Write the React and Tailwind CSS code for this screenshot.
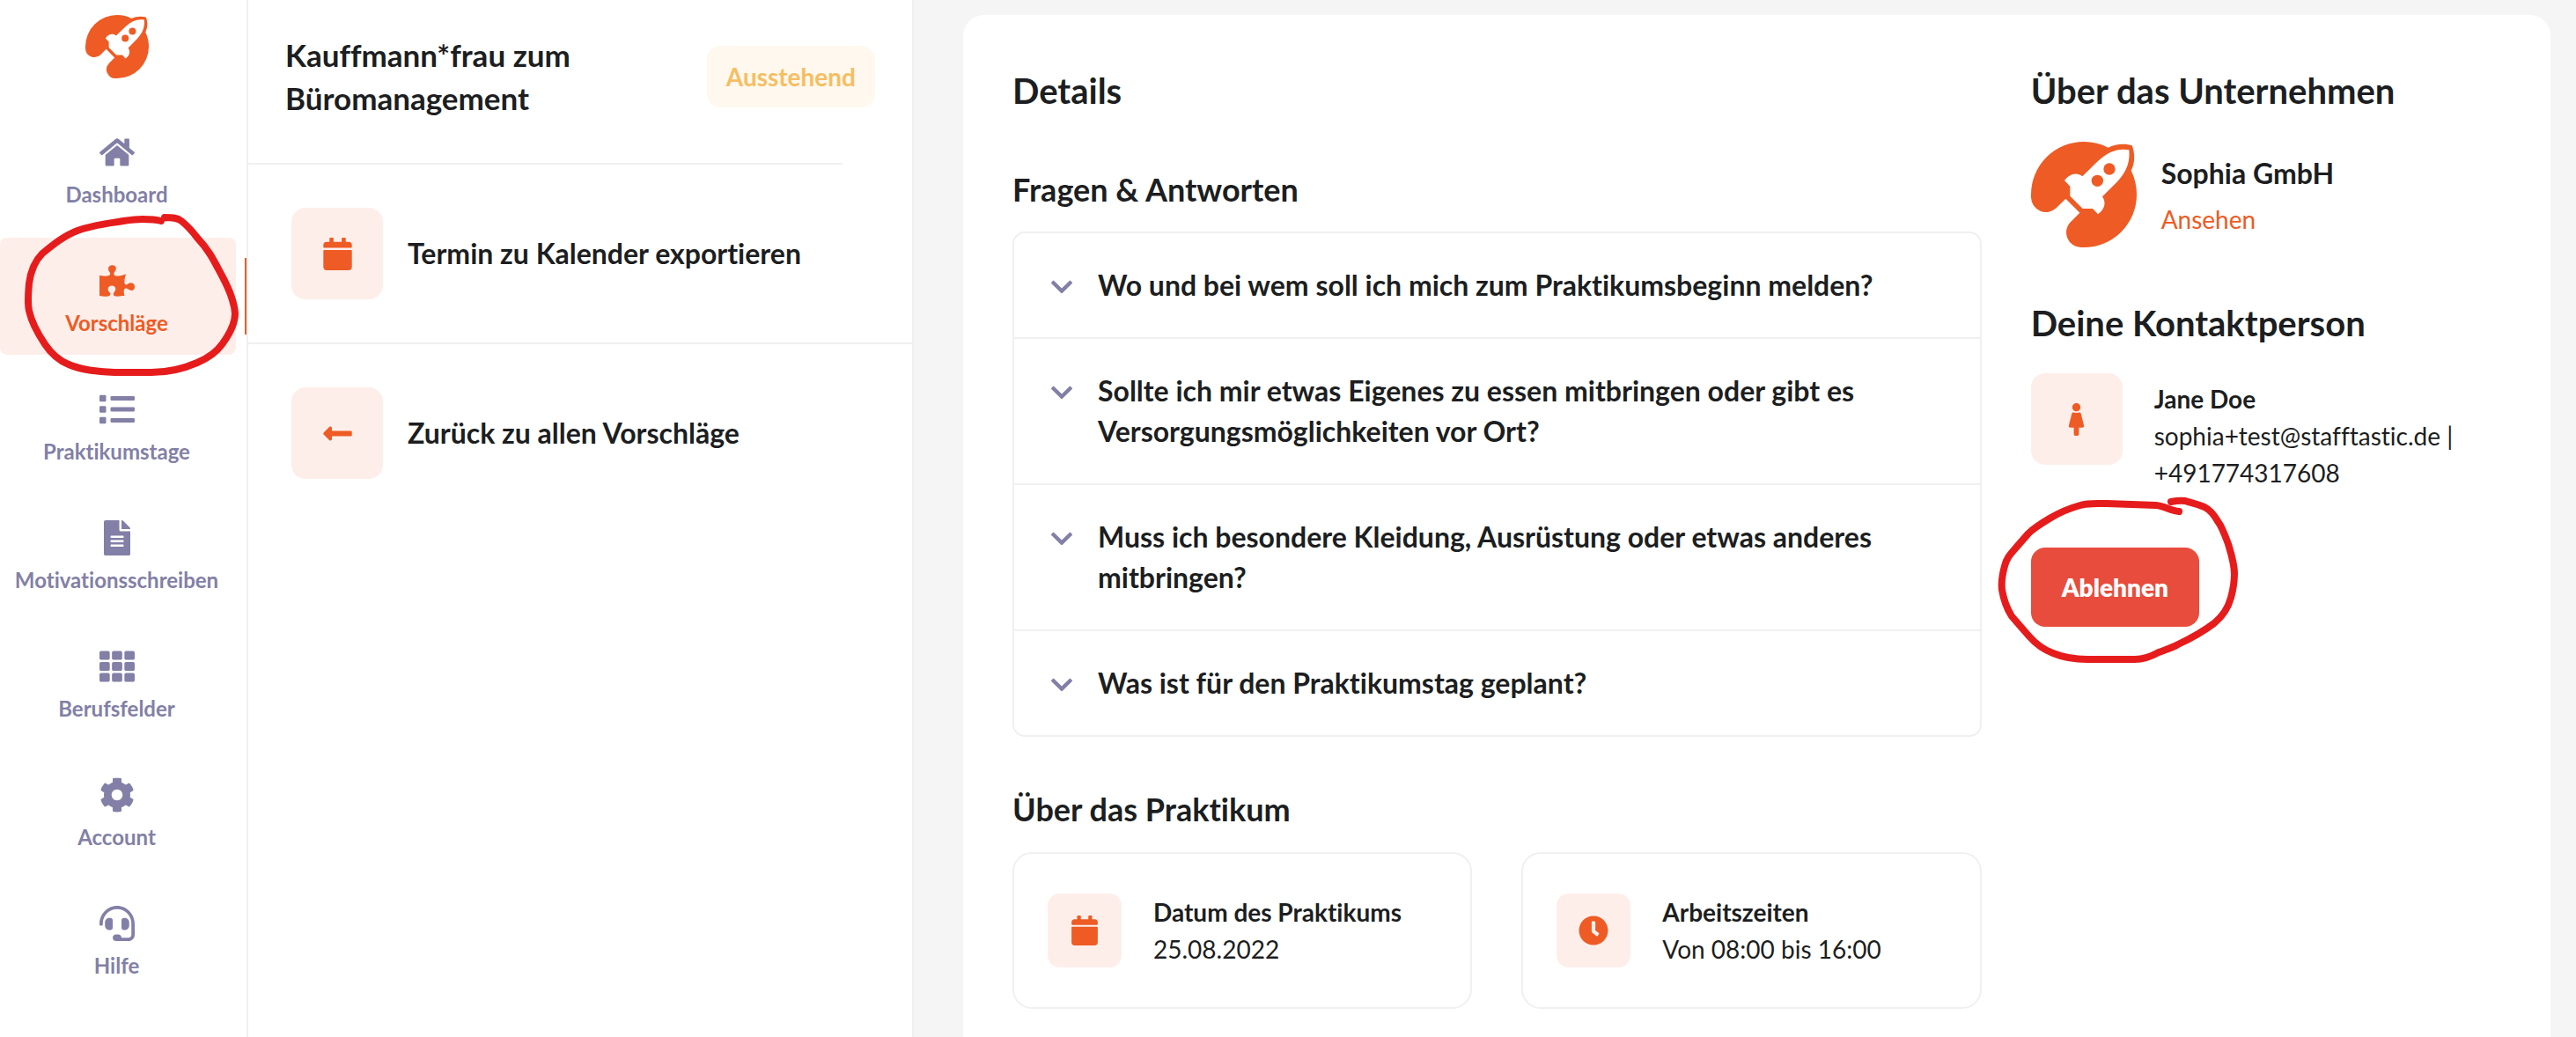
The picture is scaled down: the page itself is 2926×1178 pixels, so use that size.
import React, { useState } from 'react';
import {
  FaHome,
  FaPuzzlePiece,
  FaList,
  FaFileAlt,
  FaTh,
  FaCog,
  FaHeadset,
  FaCalendar,
  FaLongArrowAltLeft,
  FaClock,
  FaFemale,
  FaChevronDown,
} from 'react-icons/fa';

const navItems = [
  { label: 'Dashboard', icon: FaHome },
  { label: 'Vorschläge', icon: FaPuzzlePiece, active: true },
  { label: 'Praktikumstage', icon: FaList },
  { label: 'Motivationsschreiben', icon: FaFileAlt },
  { label: 'Berufsfelder', icon: FaTh },
  { label: 'Account', icon: FaCog },
  { label: 'Hilfe', icon: FaHeadset },
];

const questions = [
  'Wo und bei wem soll ich mich zum Praktikumsbeginn melden?',
  'Sollte ich mir etwas Eigenes zu essen mitbringen oder gibt es Versorgungsmöglichkeiten vor Ort?',
  'Muss ich besondere Kleidung, Ausrüstung oder etwas anderes mitbringen?',
  'Was ist für den Praktikumstag geplant?',
];

const facts = [
  { title: 'Datum des Praktikums', value: '25.08.2022', icon: FaCalendar },
  { title: 'Arbeitszeiten', value: 'Von 08:00 bis 16:00', icon: FaClock },
];

const Logo = ({ className }) => (
  <svg viewBox="18 18 360 360" className={className} aria-hidden="true">
    <path
      fill="#ee5b24"
      d="M18 198A180 180 0 0 1 198 18C228 18 256 25 281 38C305 25 340 23 362 31C373 58 372 92 359 116C372 142 378 170 378 198A180 180 0 0 1 198 378H190A51 51 0 0 1 154 290L184 260L136 212L104 244A51 51 0 0 1 18 208Z"
    />
    <path
      fill="#fff"
      d="M132 150C146 130 172 118 193 136L246 84C280 52 315 39 352 46C356 85 345 120 310 156L261 205C274 225 271 247 246 265L228 246H194L151 203V170Z"
    />
    <circle cx="285" cy="111" r="20" fill="#ee5b24" />
    <circle cx="244" cy="151" r="20" fill="#ee5b24" />
  </svg>
);

const NavCircle = () => (
  <svg
    viewBox="24 240 252 192"
    className="pointer-events-none absolute -top-[30px] left-6 z-10 h-[192px] w-[252px]"
    fill="none"
    stroke="#e61c1c"
    strokeWidth="8"
    strokeLinecap="round"
    strokeLinejoin="round"
    aria-hidden="true"
  >
    <path d="M183 251C176 249 170 249 162 249C154 249 147 250 140 251C122 254 104 256 88 262C72 268 59 279 48 288C40 296 35 307 33 322C32 333 31 344 33 353C36 367 43 379 51 391C59 403 68 410 78 414C94 421 112 422 130 423H172C190 423 208 419 224 412C238 406 246 400 253 390C261 379 267 368 267 356C266 341 259 326 252 313C242 294 237 284 224 270C217 261 211 255 206 251C201 247 194 247 187 247" />
  </svg>
);

const ButtonCircle = () => (
  <svg
    viewBox="2266 562 278 194"
    className="pointer-events-none absolute -top-[60px] -left-10 z-10 h-[194px] w-[278px]"
    fill="none"
    stroke="#e61c1c"
    strokeWidth="8"
    strokeLinecap="round"
    strokeLinejoin="round"
    aria-hidden="true"
  >
    <path d="M2474 581C2464 580 2458 575 2448 574L2392 572C2381 572 2371 571 2362 574C2347 578 2337 583 2327 589C2317 595 2309 600 2303 606L2289 622C2283 629 2278 634 2276 643C2273 654 2272 662 2273 670C2275 682 2279 692 2284 700L2304 723C2311 731 2320 738 2331 742C2343 747 2354 749 2370 749H2424C2434 749 2442 746 2451 741C2459 738 2466 736 2473 732C2488 725 2502 717 2514 708C2525 699 2530 690 2533 679C2536 668 2537 660 2537 652C2537 640 2533 628 2530 618C2526 607 2522 597 2518 592C2514 585 2509 579 2503 576C2496 573 2487 571 2481 569C2475 568 2470 569 2465 570" />
  </svg>
);

const IconBox = ({ icon: Icon, small }) => (
  <span
    className={`flex shrink-0 items-center justify-center bg-[#feeeea] text-[#ee5b24] ${
      small ? 'size-[84px] rounded-[14px] text-[34px]' : 'size-[104px] rounded-[16px] text-[37px]'
    }`}
  >
    <Icon />
  </span>
);

const Sidebar = () => (
  <aside className="flex w-[282px] shrink-0 flex-col border-r-2 border-[#f0f0f1]">
    <a href="#start" aria-label="Startseite" className="mt-[17px] ml-[97px] w-[72px]">
      <Logo className="size-[72px]" />
    </a>
    <nav className="mt-[35px] flex flex-col gap-[13px]">
      {navItems.map(({ label, icon: Icon, active }) => (
        <div key={label} className="relative pr-3">
          <a
            href={`#${label}`}
            className={`flex flex-col items-center rounded-lg pt-[29px] pr-[3px] pb-[18px] text-[24px] leading-[36px] font-bold ${
              active ? 'bg-[#feeeea] text-[#ee5b24]' : 'text-[#8280a6]'
            }`}
          >
            <Icon className="mb-[10px] text-[40px]" />
            {label}
          </a>
          {active && (
            <>
              <span className="absolute top-[23px] right-0 h-[87px] w-[2px] bg-[#ee5b24]" />
              <NavCircle />
            </>
          )}
        </div>
      ))}
    </nav>
  </aside>
);

const ActionPanel = () => (
  <section className="w-[756px] shrink-0 border-r-2 border-[#f0f0f1]">
    <div className="flex items-center justify-between gap-8 pt-[38px] pr-[42px] pb-[49px] pl-[42px]">
      <h1 className="text-[35px] leading-[49px] font-bold">
        Kauffmann*frau zum Büromanagement
      </h1>
      <span className="rounded-[16px] bg-[#fff8ee] px-[22px] py-[14px] text-[28px] leading-[42px] font-bold text-[#f6be63]">
        Ausstehend
      </span>
    </div>
    <hr className="mr-[79px] border-t-2 border-[#f0f0f1]" />
    <button
      type="button"
      className="flex w-full items-center gap-7 border-b-2 border-[#f0f0f1] py-[49px] pl-[49px] text-left text-[32px] leading-[46px] font-bold"
    >
      <IconBox icon={FaCalendar} />
      Termin zu Kalender exportieren
    </button>
    <a
      href="#vorschlaege"
      className="flex items-center gap-7 py-[49px] pl-[49px] text-[32px] leading-[46px] font-bold"
    >
      <IconBox icon={FaLongArrowAltLeft} />
      Zurück zu allen Vorschläge
    </a>
  </section>
);

const Questions = () => {
  const [open, setOpen] = useState(null);

  return (
    <div className="mt-[26px] divide-y-2 divide-[#f0f0f1] rounded-[14px] border-2 border-[#f0f0f1]">
      {questions.map((question, index) => (
        <button
          key={question}
          type="button"
          aria-expanded={open === index}
          onClick={() => setOpen(open === index ? null : index)}
          className="flex w-full items-start gap-[27px] py-9 pr-24 pl-10 text-left text-[32px] leading-[46px] font-bold"
        >
          <FaChevronDown className="mt-[11px] shrink-0 text-[28px] text-[#8280a6]" />
          {question}
        </button>
      ))}
    </div>
  );
};

const App = () => {
  return (
    <div className="flex min-h-screen bg-white font-['Lato',sans-serif] text-[#1c1e21] [font-variant-ligatures:no-common-ligatures]">
      <Sidebar />
      <ActionPanel />
      <main className="flex flex-1 bg-[#f5f5f5] pt-[17px] pr-[29px] pl-14">
        <div className="grid flex-1 grid-cols-[103fr_50fr] gap-14 rounded-t-[24px] bg-white px-14 pt-[62px] pb-7">
          <div>
            <h2 className="text-[40px] leading-[48px] font-bold">Details</h2>
            <h3 className="mt-[66px] text-[36px] leading-[44px] font-bold">Fragen &amp; Antworten</h3>
            <Questions />

            <h3 className="mt-[60px] text-[36px] leading-[44px] font-bold">Über das Praktikum</h3>
            <div className="mt-[27px] grid grid-cols-2 gap-14">
              {facts.map(({ title, value, icon }) => (
                <div
                  key={title}
                  className="flex items-center gap-9 rounded-[22px] border-2 border-[#f0f0f1] px-[38px] py-[45px]"
                >
                  <IconBox icon={icon} small />
                  <div className="text-[28px] leading-[42px]">
                    <p className="font-bold">{title}</p>
                    <p>{value}</p>
                  </div>
                </div>
              ))}
            </div>
          </div>

          <div>
            <h2 className="text-[40px] leading-[48px] font-bold">Über das Unternehmen</h2>
            <div className="mt-[34px] flex items-center gap-7">
              <Logo className="size-[120px] shrink-0" />
              <div>
                <p className="text-[32px] leading-[48px] font-bold">Sophia GmbH</p>
                <a href="#unternehmen" className="mt-[7px] block text-[28px] leading-[42px] text-[#ee5b24]">
                  Ansehen
                </a>
              </div>
            </div>

            <h2 className="mt-[62px] text-[40px] leading-[48px] font-bold">Deine Kontaktperson</h2>
            <div className="mt-[33px] flex items-start gap-9">
              <IconBox icon={FaFemale} />
              <div className="pt-2 text-[28px] leading-[42px]">
                <p className="font-bold">Jane Doe</p>
                <p>sophia+test@stafftastic.de | +491774317608</p>
              </div>
            </div>

            <div className="relative mt-16 w-fit">
              <button
                type="button"
                className="rounded-[16px] bg-[#e84c3d] px-[35px] py-6 text-[28px] leading-[42px] font-extrabold text-white"
              >
                Ablehnen
              </button>
              <ButtonCircle />
            </div>
          </div>
        </div>
      </main>
    </div>
  );
};

export default App;
